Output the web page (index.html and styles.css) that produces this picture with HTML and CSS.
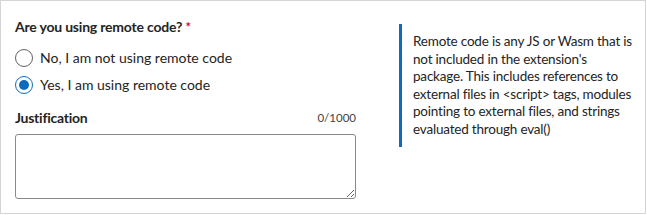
FILE: index.html
```html
<!DOCTYPE html>
<html lang="en">
<head>
    <meta charset="UTF-8">
    <title>Remote code</title>
    <link rel="stylesheet" href="styles.css">
</head>
<body>
    <div class="panel">
        <div class="form-col">
            <div class="question">Are you using remote code? <span class="required">*</span></div>

            <label class="radio-row">
                <input type="radio" name="remote" value="no">
                <span class="radio-dot"></span>
                No, I am not using remote code
            </label>
            <label class="radio-row">
                <input type="radio" name="remote" value="yes" checked>
                <span class="radio-dot"></span>
                Yes, I am using remote code
            </label>

            <div class="field-head">
                <span class="field-label">Justification</span>
                <span class="counter">0/1000</span>
            </div>
            <textarea class="justification" maxlength="1000"></textarea>
        </div>

        <div class="note">
            Remote code is any JS or Wasm that is<br>
            not included in the extension's<br>
            package. This includes references to<br>
            external files in &lt;script&gt; tags, modules<br>
            pointing to external files, and strings<br>
            evaluated through eval()
        </div>
    </div>
</body>
</html>
```

FILE: styles.css
```css
body {
    margin: 0;
    background: #fff;
    font-family: 'Segoe UI', Lato, sans-serif;
    color: #242424;
}
.panel {
    box-sizing: border-box;
    width: 646px;
    height: 214px;
    border: 1px solid #d4d4d4;
    padding: 16px 14px;
    display: flex;
    align-items: flex-start;
    gap: 43px;
}
.form-col {
    width: 341px;
    flex-shrink: 0;
}
.question {
    font-size: 14px;
    font-weight: 700;
    line-height: 20px;
    letter-spacing: -0.2px;
    margin-bottom: 7px;
}
.required {
    color: #c50f1f;
    font-size: 13px;
}
.radio-row {
    display: flex;
    align-items: center;
    gap: 7px;
    height: 27px;
    font-size: 14px;
    cursor: pointer;
}
.radio-row input {
    display: none;
}
.radio-dot {
    box-sizing: border-box;
    width: 18px;
    height: 18px;
    border: 1px solid #616161;
    border-radius: 50%;
    display: flex;
    align-items: center;
    justify-content: center;
}
.radio-row input:checked + .radio-dot {
    border-color: #0f6cbd;
}
.radio-row input:checked + .radio-dot::after {
    content: '';
    width: 10px;
    height: 10px;
    border-radius: 50%;
    background: #0f6cbd;
}
.field-head {
    display: flex;
    justify-content: space-between;
    align-items: center;
    margin-top: 10px;
    line-height: 20px;
}
.field-label {
    font-size: 14px;
    font-weight: 700;
    letter-spacing: -0.25px;
}
.counter {
    font-size: 11.5px;
    color: #424242;
}
.justification {
    display: block;
    box-sizing: border-box;
    width: 341px;
    height: 65px;
    margin-top: 6px;
    border: 1px solid #8a8a8a;
    border-radius: 3px;
    resize: vertical;
    font-family: inherit;
}
.note {
    margin-top: 7px;
    border-left: 3px solid #0f6cbd;
    padding: 9px 0 9px 11px;
    font-size: 13.5px;
    letter-spacing: -0.2px;
    line-height: 17.5px;
    white-space: nowrap;
}
```
